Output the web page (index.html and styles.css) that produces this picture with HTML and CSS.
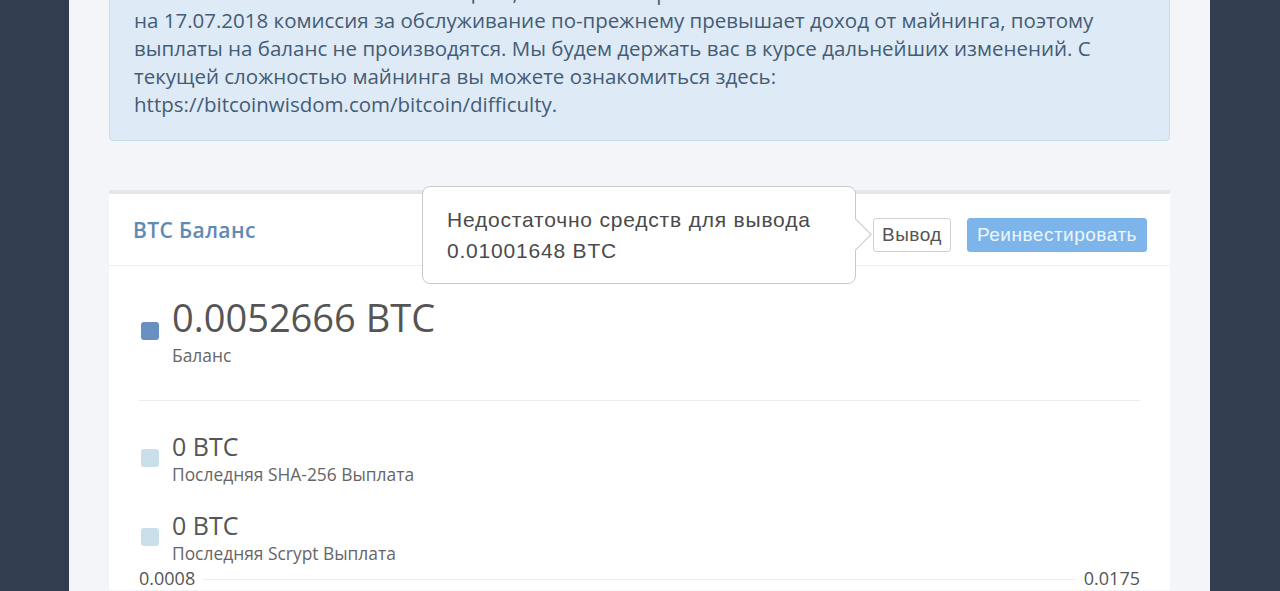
FILE: index.html
```html
<!DOCTYPE html>
<html lang="ru">
<head>
  <meta charset="UTF-8">
  <meta name="viewport" content="width=device-width, initial-scale=1.0">
  <title>BTC Баланс</title>
  <link rel="stylesheet" href="styles.css">
</head>
<body>
  <div class="page">
    <div class="alert">
      Уважаемые пользователи! Сообщаем, что в связи с ростом сложности сети по состоянию<br>
      на 17.07.2018 комиссия за обслуживание по-прежнему превышает доход от майнинга, поэтому
      выплаты на баланс не производятся. Мы будем держать вас в курсе дальнейших изменений. С
      текущей сложностью майнинга вы можете ознакомиться здесь:
      https://bitcoinwisdom.com/bitcoin/difficulty.
    </div>

    <div class="panel">
      <div class="panel-header">
        <div class="panel-title">BTC Баланс</div>
        <div class="actions">
          <div class="withdraw-wrap">
            <div class="popover">
              Недостаточно средств для вывода<br>
              0.01001648 BTC
            </div>
            <button class="btn btn-default">Вывод</button>
          </div>
          <button class="btn btn-primary">Реинвестировать</button>
        </div>
      </div>

      <div class="panel-body">
        <div class="stat stat-main">
          <span class="marker marker-dark"></span>
          <div>
            <div class="stat-value">0.0052666 BTC</div>
            <div class="stat-label">Баланс</div>
          </div>
        </div>

        <div class="stat stat-first">
          <span class="marker marker-light"></span>
          <div>
            <div class="stat-value small">0 BTC</div>
            <div class="stat-label">Последняя SHA-256 Выплата</div>
          </div>
        </div>

        <div class="stat stat-second">
          <span class="marker marker-light"></span>
          <div>
            <div class="stat-value small">0 BTC</div>
            <div class="stat-label">Последняя Scrypt Выплата</div>
          </div>
        </div>

        <div class="axis">
          <span>0.0008</span>
          <span class="axis-line"></span>
          <span>0.0175</span>
        </div>
      </div>
    </div>
  </div>
</body>
</html>
```

FILE: styles.css
```css
body {
  margin: 0;
  padding: 0;
  background-color: #323e4f;
  font-family: "Open Sans", sans-serif;
  overflow: hidden;
}

.page {
  display: flow-root;
  width: 1141px;
  height: 591px;
  margin-left: 69px;
  padding: 0 40px;
  box-sizing: border-box;
  background-color: #f4f5f9;
}

.alert {
  margin-top: -43px;
  padding: 20px 24px 22px 24px;
  background-color: #deeaf5;
  border: 1px solid #c9dcec;
  border-radius: 4px;
  color: #445c76;
  font-size: 20.5px;
  line-height: 28px;
}

.panel {
  margin-top: 49px;
  background-color: #fff;
  border-top: 4px solid #e4e6ea;
}

.panel-header {
  display: flex;
  align-items: center;
  justify-content: space-between;
  height: 71px;
  padding: 0 23px 0 24px;
  border-bottom: 1px solid #eceef1;
}

.panel-title {
  color: #6189b6;
  font-size: 21px;
  font-weight: 600;
  letter-spacing: 0.4px;
}

.actions {
  display: flex;
  gap: 16px;
  margin-top: 11px;
}

.withdraw-wrap {
  position: relative;
}

.btn {
  height: 34px;
  border-radius: 3px;
  font-family: "Liberation Sans", Arial, sans-serif;
  font-size: 19px;
  letter-spacing: 0.5px;
  cursor: pointer;
}

.btn-default {
  padding: 0 8px;
  background-color: #fff;
  border: 1px solid #cfcfcf;
  color: #555;
}

.btn-primary {
  padding: 0 9px;
  background-color: #7db5ea;
  border: 1px solid #7db5ea;
  color: #eef5fd;
}

.popover {
  position: absolute;
  right: calc(100% + 17px);
  top: -32px;
  width: 434px;
  box-sizing: border-box;
  padding: 17px 24px;
  background-color: #fff;
  border: 1px solid #c8c8c8;
  border-radius: 8px;
  color: #4a4a4a;
  font-family: "Liberation Sans", Arial, sans-serif;
  font-size: 21px;
  letter-spacing: 0.8px;
  line-height: 31px;
}

.popover::after {
  content: "";
  position: absolute;
  right: -12px;
  top: 36px;
  width: 22px;
  height: 22px;
  background-color: #fff;
  border-top: 1px solid #c8c8c8;
  border-right: 1px solid #c8c8c8;
  transform: rotate(45deg);
}

.panel-body {
  padding: 0 30px;
}

.stat {
  display: flex;
  align-items: center;
  padding-left: 2px;
}

.stat-main {
  padding-top: 28px;
  padding-bottom: 33px;
  border-bottom: 1px solid #ececec;
}

.stat-first {
  padding-top: 29px;
}

.stat-second {
  padding-top: 23px;
}

.marker {
  width: 18px;
  height: 18px;
  border-radius: 3px;
  margin-right: 13px;
  flex-shrink: 0;
}

.marker-dark {
  background-color: #6890c0;
}

.marker-light {
  background-color: #c9dfea;
}

.stat-value {
  color: #555;
  font-size: 38px;
  line-height: 46px;
}

.stat-value.small {
  font-size: 25px;
  line-height: 32px;
}

.stat-label {
  color: #666;
  font-size: 17.4px;
  line-height: 24px;
}

.stat-main .stat-label {
  margin-top: 3px;
}

.axis {
  display: flex;
  align-items: center;
  margin-top: 1px;
  color: #555;
  font-size: 18px;
  line-height: 24px;
}

.axis-line {
  flex: 1;
  height: 1px;
  margin: 2px 8px 0 8px;
  background-color: #eeeeee;
}
```
